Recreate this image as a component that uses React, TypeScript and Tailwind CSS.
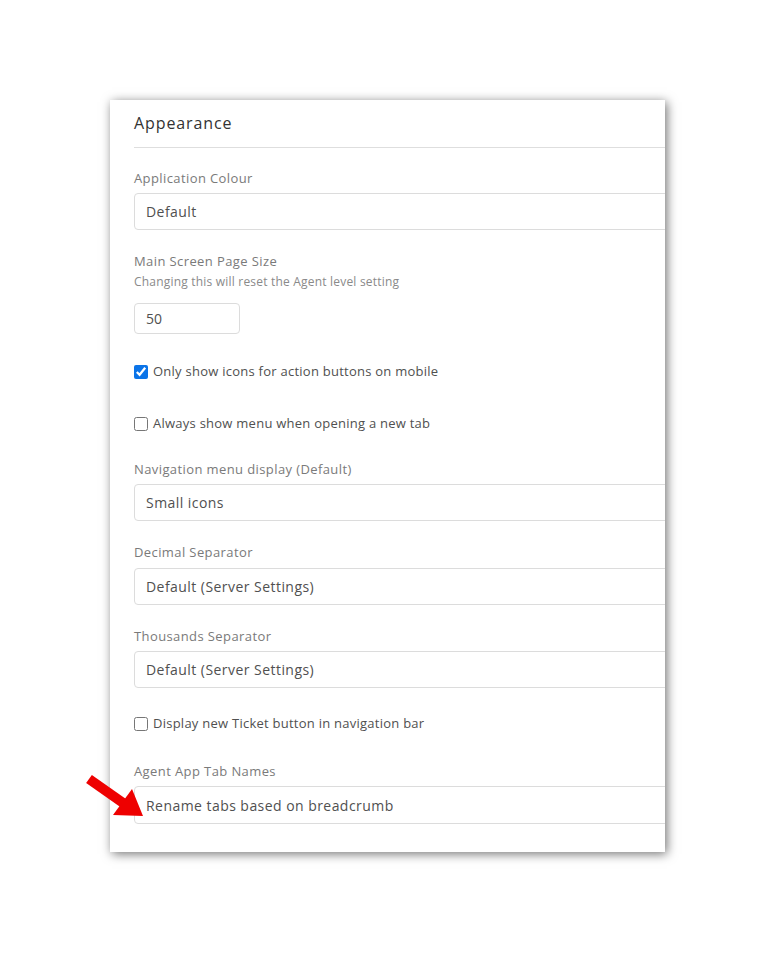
import React from 'react';

const font = { fontFamily: '"Open Sans", "Noto Sans", sans-serif' };

const Label = ({ children, className = '' }: { children: React.ReactNode; className?: string }) => (
  <div className={`text-[13px] leading-[18px] tracking-[0.4px] text-[#7a7a7a] ${className}`}>{children}</div>
);

const Select = ({ value, className = '' }: { value: string; className?: string }) => (
  <div
    className={`w-[560px] h-[37px] flex items-center pl-[11px] border border-[#dcdcdc] rounded-[4px] text-[14px] tracking-[0.45px] text-[#505050] ${className}`}
  >
    {value}
  </div>
);

const Check = ({ checked, label, className = '' }: { checked?: boolean; label: string; className?: string }) => (
  <label className={`flex items-center gap-[5px] h-[20px] text-[13px] tracking-[0.25px] text-[#505050] ${className}`}>
    <input type="checkbox" defaultChecked={checked} className="w-[14px] h-[14px] m-0 accent-[#0b74e8]" />
    {label}
  </label>
);

export default function App() {
  return (
    <div className="relative min-h-screen bg-white pt-[100px] pl-[110px]" style={font}>
      <div className="w-[555px] bg-white overflow-hidden pl-[24px] pt-[11px] pb-[28px] shadow-[2px_2px_10px_rgba(0,0,0,0.55)]">
        <h2 className="text-[16px] leading-[24px] tracking-[0.9px] text-[#333]">Appearance</h2>
        <div className="mt-[12px] border-t border-[#dedede]" />

        <Label className="mt-[21px]">Application Colour</Label>
        <Select value="Default" className="mt-[6px]" />

        <Label className="mt-[22px]">Main Screen Page Size</Label>
        <div className="mt-[4px] text-[12px] leading-[16px] tracking-[0.2px] text-[#8a8a8a]">
          Changing this will reset the Agent level setting
        </div>
        <div className="mt-[13px] w-[106px] h-[31px] flex items-center pl-[11px] border border-[#dcdcdc] rounded-[4px] text-[14px] text-[#505050]">
          50
        </div>

        <Check checked label="Only show icons for action buttons on mobile" className="mt-[28px]" />
        <Check label="Always show menu when opening a new tab" className="mt-[32px]" />

        <Label className="mt-[26px]">Navigation menu display (Default)</Label>
        <Select value="Small icons" className="mt-[6px]" />

        <Label className="mt-[22px]">Decimal Separator</Label>
        <Select value="Default (Server Settings)" className="mt-[7px]" />

        <Label className="mt-[22px]">Thousands Separator</Label>
        <Select value="Default (Server Settings)" className="mt-[6px]" />

        <Check label="Display new Ticket button in navigation bar" className="mt-[26px]" />

        <Label className="mt-[28px]">Agent App Tab Names</Label>
        <Select value="Rename tabs based on breadcrumb" className="mt-[6px] h-[38px]" />
      </div>

      <svg className="absolute left-[84px] top-[774px]" width="66" height="48" viewBox="0 0 66 48">
        <line x1="5" y1="5" x2="42" y2="31" stroke="#ee0000" strokeWidth="10" />
        <polygon points="59,42 29,41 48,15" fill="#ee0000" />
      </svg>
    </div>
  );
}
